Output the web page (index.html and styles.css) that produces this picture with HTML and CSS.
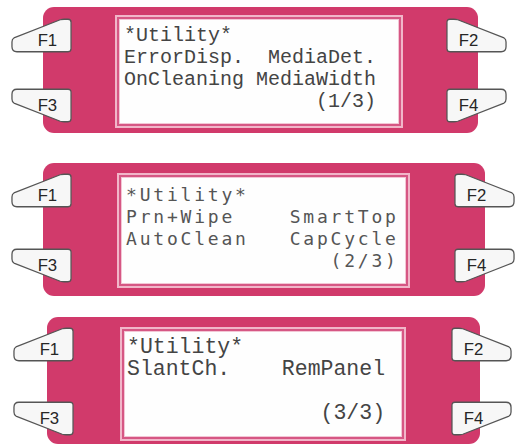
FILE: index.html
```html
<!DOCTYPE html>
<html>
<head>
<meta charset="utf-8">
<link rel="stylesheet" href="styles.css">
</head>
<body>
<div class="stack">

  <div class="device d1">
    <div class="keys keys-left">
      <svg class="key" viewBox="0 0 64 35"><path class="kshape" d="M4 20 L51 1.5 Q53 1 55 1 L59 1 Q62 1 62 4 L62 31 Q62 34 59 34 L7 34 Q2 34 2 29 L2 24 Q2 21 4 20 Z"/><text class="klabel" x="38" y="28">F1</text></svg>
      <svg class="key" viewBox="0 0 64 35"><path class="kshape" d="M4 15 L51 33.5 Q53 34 55 34 L59 34 Q62 34 62 31 L62 4 Q62 1 59 1 L7 1 Q2 1 2 6 L2 11 Q2 14 4 15 Z"/><text class="klabel" x="38" y="23">F3</text></svg>
    </div>
    <div class="panel">
      <div class="screen">
        <div class="lcd mono">
          <div class="line">*Utility*</div>
          <div class="line">ErrorDisp.  MediaDet.</div>
          <div class="line">OnCleaning MediaWidth</div>
          <div class="line">                (1/3)</div>
        </div>
      </div>
    </div>
    <div class="keys keys-right">
      <svg class="key" viewBox="0 0 64 35"><path class="kshape" d="M60 20 L13 1.5 Q11 1 9 1 L5 1 Q2 1 2 4 L2 31 Q2 34 5 34 L57 34 Q62 34 62 29 L62 24 Q62 21 60 20 Z"/><text class="klabel" x="24" y="28">F2</text></svg>
      <svg class="key" viewBox="0 0 64 35"><path class="kshape" d="M60 15 L13 33.5 Q11 34 9 34 L5 34 Q2 34 2 31 L2 4 Q2 1 5 1 L57 1 Q62 1 62 6 L62 11 Q62 14 60 15 Z"/><text class="klabel" x="24" y="23">F4</text></svg>
    </div>
  </div>

  <div class="device d2">
    <div class="keys keys-left">
      <svg class="key" viewBox="0 0 64 35"><path class="kshape" d="M4 20 L51 1.5 Q53 1 55 1 L59 1 Q62 1 62 4 L62 31 Q62 34 59 34 L7 34 Q2 34 2 29 L2 24 Q2 21 4 20 Z"/><text class="klabel" x="38" y="28">F1</text></svg>
      <svg class="key" viewBox="0 0 64 35"><path class="kshape" d="M4 15 L51 33.5 Q53 34 55 34 L59 34 Q62 34 62 31 L62 4 Q62 1 59 1 L7 1 Q2 1 2 6 L2 11 Q2 14 4 15 Z"/><text class="klabel" x="38" y="23">F3</text></svg>
    </div>
    <div class="panel">
      <div class="screen">
        <div class="lcd dot">
          <div class="line">*Utility*</div>
          <div class="line">Prn+Wipe    SmartTop</div>
          <div class="line">AutoClean   CapCycle</div>
          <div class="line">               (2/3)</div>
        </div>
      </div>
    </div>
    <div class="keys keys-right">
      <svg class="key" viewBox="0 0 64 35"><path class="kshape" d="M60 20 L13 1.5 Q11 1 9 1 L5 1 Q2 1 2 4 L2 31 Q2 34 5 34 L57 34 Q62 34 62 29 L62 24 Q62 21 60 20 Z"/><text class="klabel" x="24" y="28">F2</text></svg>
      <svg class="key" viewBox="0 0 64 35"><path class="kshape" d="M60 15 L13 33.5 Q11 34 9 34 L5 34 Q2 34 2 31 L2 4 Q2 1 5 1 L57 1 Q62 1 62 6 L62 11 Q62 14 60 15 Z"/><text class="klabel" x="24" y="23">F4</text></svg>
    </div>
  </div>

  <div class="device d3">
    <div class="keys keys-left">
      <svg class="key" viewBox="0 0 64 35"><path class="kshape" d="M4 20 L51 1.5 Q53 1 55 1 L59 1 Q62 1 62 4 L62 31 Q62 34 59 34 L7 34 Q2 34 2 29 L2 24 Q2 21 4 20 Z"/><text class="klabel" x="38" y="28">F1</text></svg>
      <svg class="key" viewBox="0 0 64 35"><path class="kshape" d="M4 15 L51 33.5 Q53 34 55 34 L59 34 Q62 34 62 31 L62 4 Q62 1 59 1 L7 1 Q2 1 2 6 L2 11 Q2 14 4 15 Z"/><text class="klabel" x="38" y="23">F3</text></svg>
    </div>
    <div class="panel">
      <div class="screen">
        <div class="lcd mono big">
          <div class="line">*Utility*</div>
          <div class="line">SlantCh.    RemPanel</div>
          <div class="line"> </div>
          <div class="line">               (3/3)</div>
        </div>
      </div>
    </div>
    <div class="keys keys-right">
      <svg class="key" viewBox="0 0 64 35"><path class="kshape" d="M60 20 L13 1.5 Q11 1 9 1 L5 1 Q2 1 2 4 L2 31 Q2 34 5 34 L57 34 Q62 34 62 29 L62 24 Q62 21 60 20 Z"/><text class="klabel" x="24" y="28">F2</text></svg>
      <svg class="key" viewBox="0 0 64 35"><path class="kshape" d="M60 15 L13 33.5 Q11 34 9 34 L5 34 Q2 34 2 31 L2 4 Q2 1 5 1 L57 1 Q62 1 62 6 L62 11 Q62 14 60 15 Z"/><text class="klabel" x="24" y="23">F4</text></svg>
    </div>
  </div>

</div>
</body>
</html>
```

FILE: styles.css
```css
html, body {
  margin: 0;
  padding: 0;
  background: #ffffff;
}

.stack {
  display: flex;
  flex-direction: column;
  width: 518px;
  height: 445px;
  overflow: hidden;
}

.device {
  display: flex;
  align-items: stretch;
}

.keys {
  position: relative;
  z-index: 2;
  display: flex;
  flex-direction: column;
  justify-content: space-between;
  width: 63px;
  flex: none;
}

.key {
  display: block;
  width: 63px;
  height: 35px;
}

.kshape {
  fill: #f7f7f7;
  stroke: #555555;
  stroke-width: 1.3;
}

.klabel {
  font-family: "Liberation Sans", Arial, sans-serif;
  font-size: 17px;
  fill: #262626;
  text-anchor: middle;
}

.panel {
  flex: none;
  background: #d13a6b;
  border-radius: 11px;
  box-sizing: border-box;
  display: flex;
}

.screen {
  flex: 1;
  border: 2px solid #f1b6c9;
  background: #d65784;
  padding: 3px;
  display: flex;
}

.lcd {
  flex: 1;
  background: #fefefe;
  box-shadow: 0 0 0 1px #f3c6d5;
  overflow: hidden;
}

.line {
  white-space: pre;
  height: 22px;
}

.mono {
  font-family: "Liberation Mono", "Courier New", monospace;
  font-size: 20px;
  line-height: 22px;
  color: #444444;
}

.mono.big {
  font-size: 21.5px;
}

.dot {
  font-family: "DejaVu Sans Mono", monospace;
  font-size: 18px;
  letter-spacing: 2.8px;
  line-height: 22.5px;
  color: #555555;
}

/* device 1 */
.d1 {
  margin-top: 7px;
  height: 126px;
}
.d1 .keys-left {
  margin-left: 10px;
  padding: 11px 0 10px;
}
.d1 .panel {
  width: 435px;
  margin-left: -30px;
  padding: 8px 75px 5px 72px;
}
.d1 .keys-right {
  margin-left: -33px;
  padding: 11px 0 10px;
}
.d1 .lcd {
  padding: 5px 0 0 4px;
}

/* device 2 */
.d2 {
  margin-top: 30px;
  height: 133px;
}
.d2 .keys-left {
  margin-left: 10px;
  padding: 10px 0 13px;
}
.d2 .panel {
  width: 442px;
  margin-left: -30px;
  padding: 10px 75px 8px 74px;
}
.d2 .keys-right {
  margin-left: -32px;
  padding: 10px 0 13px;
}
.d2 .lcd {
  padding: 6px 0 0 4px;
}

/* device 3 */
.d3 {
  margin-top: 21px;
  height: 127px;
}
.d3 .keys-left {
  margin-left: 12px;
  padding: 10px 0 8px;
}
.d3 .panel {
  width: 433px;
  margin-left: -28px;
  padding: 10px 74px 3px 73px;
}
.d3 .keys-right {
  margin-left: -30px;
  padding: 10px 0 8px;
}
.d3 .lcd {
  padding: 4px 0 0 2px;
}
```
